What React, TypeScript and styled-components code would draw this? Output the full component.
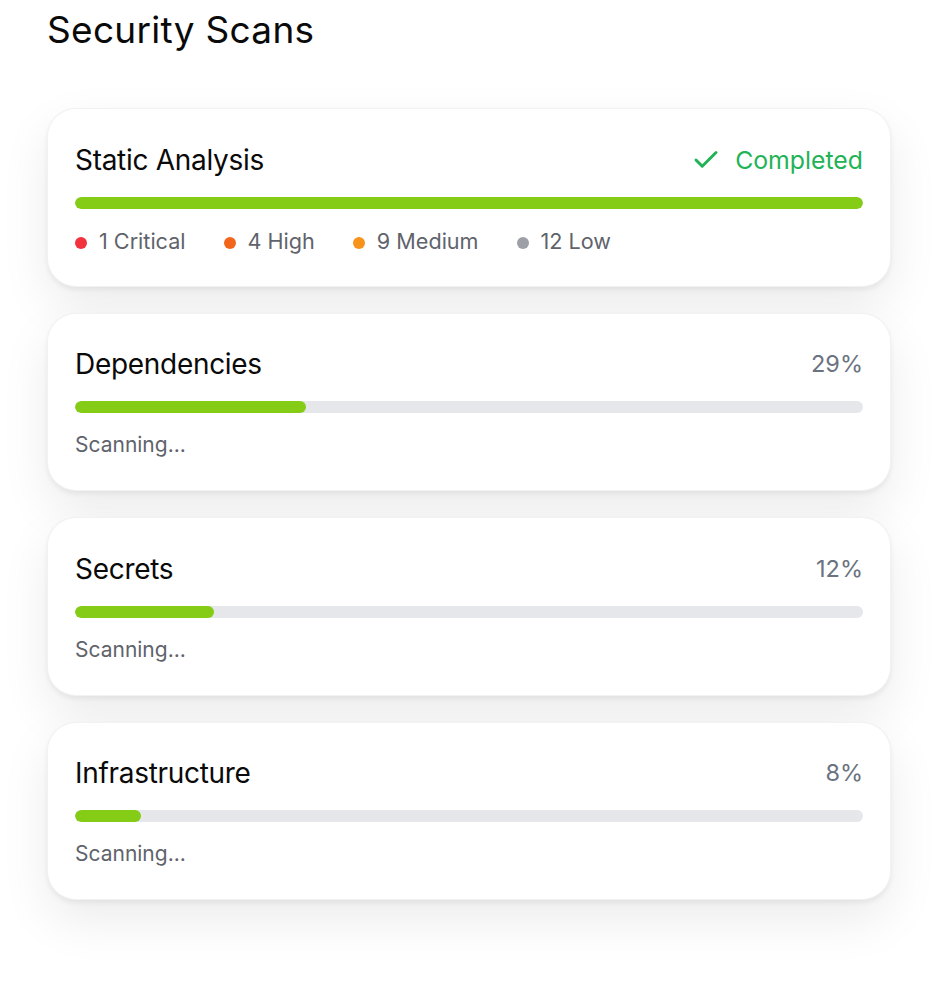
import React from "react";
import styled, { createGlobalStyle } from "styled-components";

const Global = createGlobalStyle`
  html, body { margin: 0; padding: 0; background: #ffffff; }
  body { font-family: Inter, "Noto Sans", "Liberation Sans", sans-serif; -webkit-font-smoothing: antialiased; }
  * { box-sizing: border-box; }
`;

const Page = styled.main`
  padding: 8px 47px 60px;
`;

const Heading = styled.h1`
  margin: 0 0 57px;
  font-size: 37px;
  line-height: 43px;
  font-weight: 400;
  color: #0a0a0a;
  letter-spacing: 0.3px;
`;

const List = styled.div`
  display: flex;
  flex-direction: column;
  gap: 26px;
`;

const Card = styled.section`
  background: #fff;
  border: 1px solid rgba(0, 0, 0, 0.05);
  border-radius: 29px;
  padding: 29.5px 27px 29px;
  box-shadow: 0 3px 5px rgba(0, 0, 0, 0.06), 0 20px 50px rgba(0, 0, 0, 0.08);
`;

const Header = styled.div`
  display: flex;
  align-items: center;
  justify-content: space-between;
  height: 42px;
`;

const Title = styled.h2`
  margin: 0;
  font-size: 28px;
  line-height: 42px;
  font-weight: 400;
  color: #0a0a0a;
  letter-spacing: -0.3px;
`;

const Percent = styled.span`
  font-size: 23.5px;
  line-height: 36px;
  color: #6b7280;
`;

const Status = styled.span`
  display: flex;
  align-items: center;
  gap: 14px;
  font-size: 24.8px;
  line-height: 36px;
  color: #22b357;
  font-weight: 400;
`;

const Track = styled.div`
  margin-top: 16px;
  height: 12px;
  border-radius: 999px;
  background: #e5e7eb;
  overflow: hidden;
`;

const Fill = styled.div`
  height: 100%;
  border-radius: 999px;
  background: #84cc16;
`;

const Footer = styled.div`
  margin-top: 16px;
  display: flex;
  align-items: center;
  gap: 38px;
  font-size: 21px;
  line-height: 32px;
  color: #5f636b;
`;

const Legend = styled.span`
  display: flex;
  align-items: center;
  gap: 12px;
  font-size: 21.6px;
`;

const Dot = styled.span<{ $color: string }>`
  width: 12px;
  height: 12px;
  border-radius: 50%;
  background: ${(p) => p.$color};
  margin-top: 4px;
  flex: none;
`;

const Check = () => (
  <svg width="30" height="30" viewBox="0 0 24 24" fill="none" stroke="currentColor" strokeWidth="2.4" strokeLinecap="round" strokeLinejoin="round">
    <path d="M20 6 9 17l-5-5" />
  </svg>
);

const scans = [
  { name: "Dependencies", pct: 29, fill: 29.3 },
  { name: "Secrets", pct: 12, fill: 17.6 },
  { name: "Infrastructure", pct: 8, fill: 8.4 },
];

const legend = [
  { label: "1 Critical", color: "#f2323d" },
  { label: "4 High", color: "#f2661c" },
  { label: "9 Medium", color: "#f7921a" },
  { label: "12 Low", color: "#9ca0a6" },
];

export default function App() {
  return (
    <Page>
      <Global />
      <Heading>Security Scans</Heading>
      <List>
        <Card>
          <Header>
            <Title>Static Analysis</Title>
            <Status>
              <Check />
              Completed
            </Status>
          </Header>
          <Track>
            <Fill style={{ width: "100%" }} />
          </Track>
          <Footer>
            {legend.map((l) => (
              <Legend key={l.label}>
                <Dot $color={l.color} />
                {l.label}
              </Legend>
            ))}
          </Footer>
        </Card>
        {scans.map((s) => (
          <Card key={s.name}>
            <Header>
              <Title>{s.name}</Title>
              <Percent>{s.pct}%</Percent>
            </Header>
            <Track>
              <Fill style={{ width: `${s.fill}%` }} />
            </Track>
            <Footer>Scanning...</Footer>
          </Card>
        ))}
      </List>
    </Page>
  );
}
